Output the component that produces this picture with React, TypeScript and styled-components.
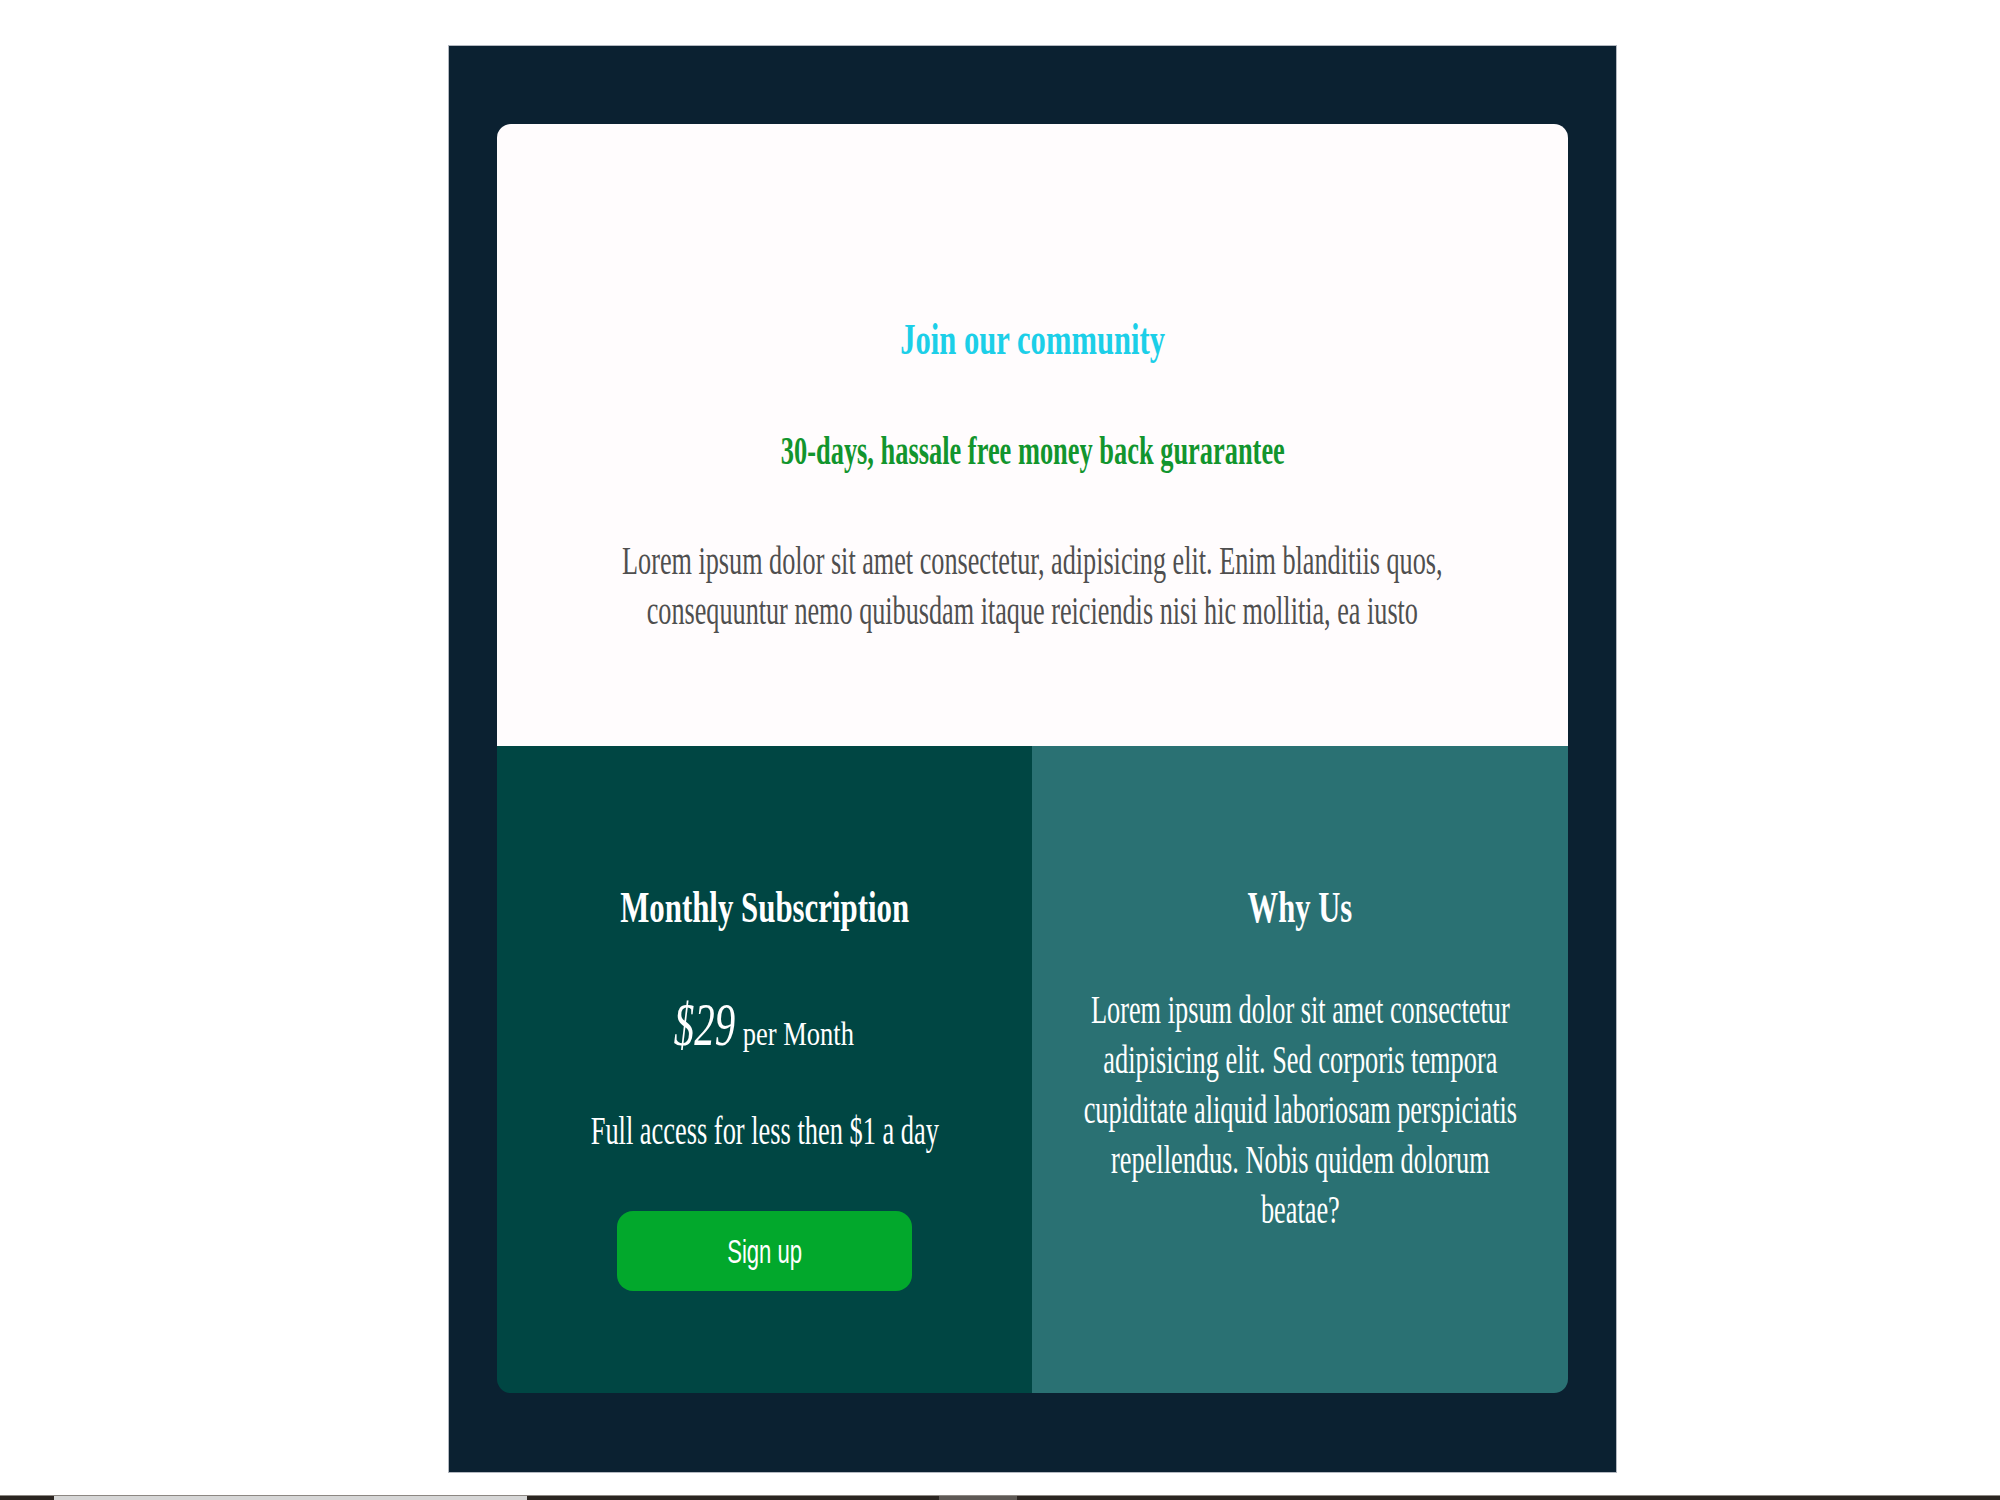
import React from "react";
import styled, { createGlobalStyle } from "styled-components";

const Global = createGlobalStyle`
  html, body { margin: 0; padding: 0; background: #ffffff; }
  body { font-family: "Liberation Serif", "Times New Roman", serif; }
`;

const Page = styled.div`
  min-height: 1500px;
  display: flex;
  flex-direction: column;
`;

const Stage = styled.div`
  flex: 1;
  padding: 45px 0 0 448px;
`;

const Frame = styled.div`
  box-sizing: border-box;
  width: 1169px;
  height: 1428px;
  background: #0b2131;
  border: 1px solid #b3b8c0;
  padding: 78px 48px 79px;
`;

const Card = styled.div`
  height: 1269px;
  border-radius: 14px;
  overflow: hidden;
  display: grid;
  grid-template-columns: minmax(0, 1fr);
  grid-template-rows: 622px 1fr;
`;

const Hero = styled.section`
  min-width: 0;
  background: #fffcfd;
  display: flex;
  flex-direction: column;
  align-items: center;
  padding-top: 193px;
  box-sizing: border-box;
`;

const Squeeze = styled.div<{ $sx: number }>`
  margin: 0;
  width: max-content;
  white-space: nowrap;
  text-align: center;
  transform: scaleX(${(p) => p.$sx});
  transform-origin: 50% 50%;
`;

const Title = styled(Squeeze)`
  font-size: 45px;
  line-height: 45px;
  font-weight: 700;
  color: #1ccfe8;
`;

const Subtitle = styled(Squeeze)`
  margin-top: 69px;
  font-size: 40px;
  line-height: 40px;
  font-weight: 700;
  color: #12952d;
`;

const Lead = styled(Squeeze)`
  margin-top: 65px;
  font-size: 40px;
  line-height: 50px;
  color: #4f4f4f;
`;

const Split = styled.div`
  min-width: 0;
  display: grid;
  grid-template-columns: 535px 536px;
`;

const Column = styled.section<{ $bg: string }>`
  min-width: 0;
  background: ${(p) => p.$bg};
  display: flex;
  flex-direction: column;
  align-items: center;
  padding-top: 139px;
  color: #ffffff;
`;

const ColHeading = styled(Squeeze)`
  font-size: 45px;
  line-height: 45px;
  font-weight: 700;
`;

const PriceRow = styled.div`
  margin-top: 63px;
  display: flex;
  align-items: baseline;
  gap: 6px;
  line-height: 62px;
`;

const Amount = styled(Squeeze)`
  margin: 0 -16px;
  font-size: 62px;
  font-style: italic;
`;

const Per = styled(Squeeze)`
  margin: 0 -14px;
  font-size: 34px;
  line-height: 34px;
`;

const Note = styled(Squeeze)`
  margin-top: 56px;
  font-size: 40px;
  line-height: 40px;
`;

const SignUp = styled.button`
  margin-top: 60px;
  width: 295px;
  height: 80px;
  border: none;
  border-radius: 16px;
  background: #02a82c;
  color: #ffffff;
  display: flex;
  align-items: center;
  justify-content: center;
  padding: 0;
  cursor: pointer;
`;

const ButtonLabel = styled(Squeeze)`
  font-family: "Liberation Sans", Arial, sans-serif;
  font-size: 34px;
  line-height: 34px;
`;

const Body = styled(Squeeze)`
  margin-top: 55px;
  font-size: 40px;
  line-height: 50px;
`;

const BottomBar = styled.div`
  height: 5px;
  display: grid;
  grid-template-columns: 54px 473px 412px 78px 1fr;
  border-top: 1px solid #8c8782;
  box-sizing: border-box;
`;

const BarPart = styled.div<{ $c: string }>`
  background: ${(p) => p.$c};
`;

export default function App() {
  return (
    <>
      <Global />
      <Page>
        <Stage>
          <Frame>
            <Card>
              <Hero>
                <Title as="h1" $sx={0.68}>Join our community</Title>
                <Subtitle as="h2" $sx={0.66}>30-days, hassale free money back gurarantee</Subtitle>
                <Lead as="p" $sx={0.655}>
                  Lorem ipsum dolor sit amet consectetur, adipisicing elit. Enim blanditiis quos,
                  <br />
                  consequuntur nemo quibusdam itaque reiciendis nisi hic mollitia, ea iusto
                </Lead>
              </Hero>
              <Split>
                <Column $bg="#004643">
                  <ColHeading as="h2" $sx={0.686}>Monthly Subscription</ColHeading>
                  <PriceRow>
                    <Amount $sx={0.66}>$29</Amount>
                    <Per $sx={0.78}>per Month</Per>
                  </PriceRow>
                  <Note as="p" $sx={0.66}>Full access for less then $1 a day</Note>
                  <SignUp type="button">
                    <ButtonLabel $sx={0.65}>Sign up</ButtonLabel>
                  </SignUp>
                </Column>
                <Column $bg="#2a7173">
                  <ColHeading as="h2" $sx={0.68}>Why Us</ColHeading>
                  <Body as="p" $sx={0.658}>
                    Lorem ipsum dolor sit amet consectetur
                    <br />
                    adipisicing elit. Sed corporis tempora
                    <br />
                    cupiditate aliquid laboriosam perspiciatis
                    <br />
                    repellendus. Nobis quidem dolorum
                    <br />
                    beatae?
                  </Body>
                </Column>
              </Split>
            </Card>
          </Frame>
        </Stage>
        <BottomBar>
          <BarPart $c="#2b2521" />
          <BarPart $c="#d6d6d6" />
          <BarPart $c="#2b2521" />
          <BarPart $c="#5e5955" />
          <BarPart $c="#2b2521" />
        </BottomBar>
      </Page>
    </>
  );
}
